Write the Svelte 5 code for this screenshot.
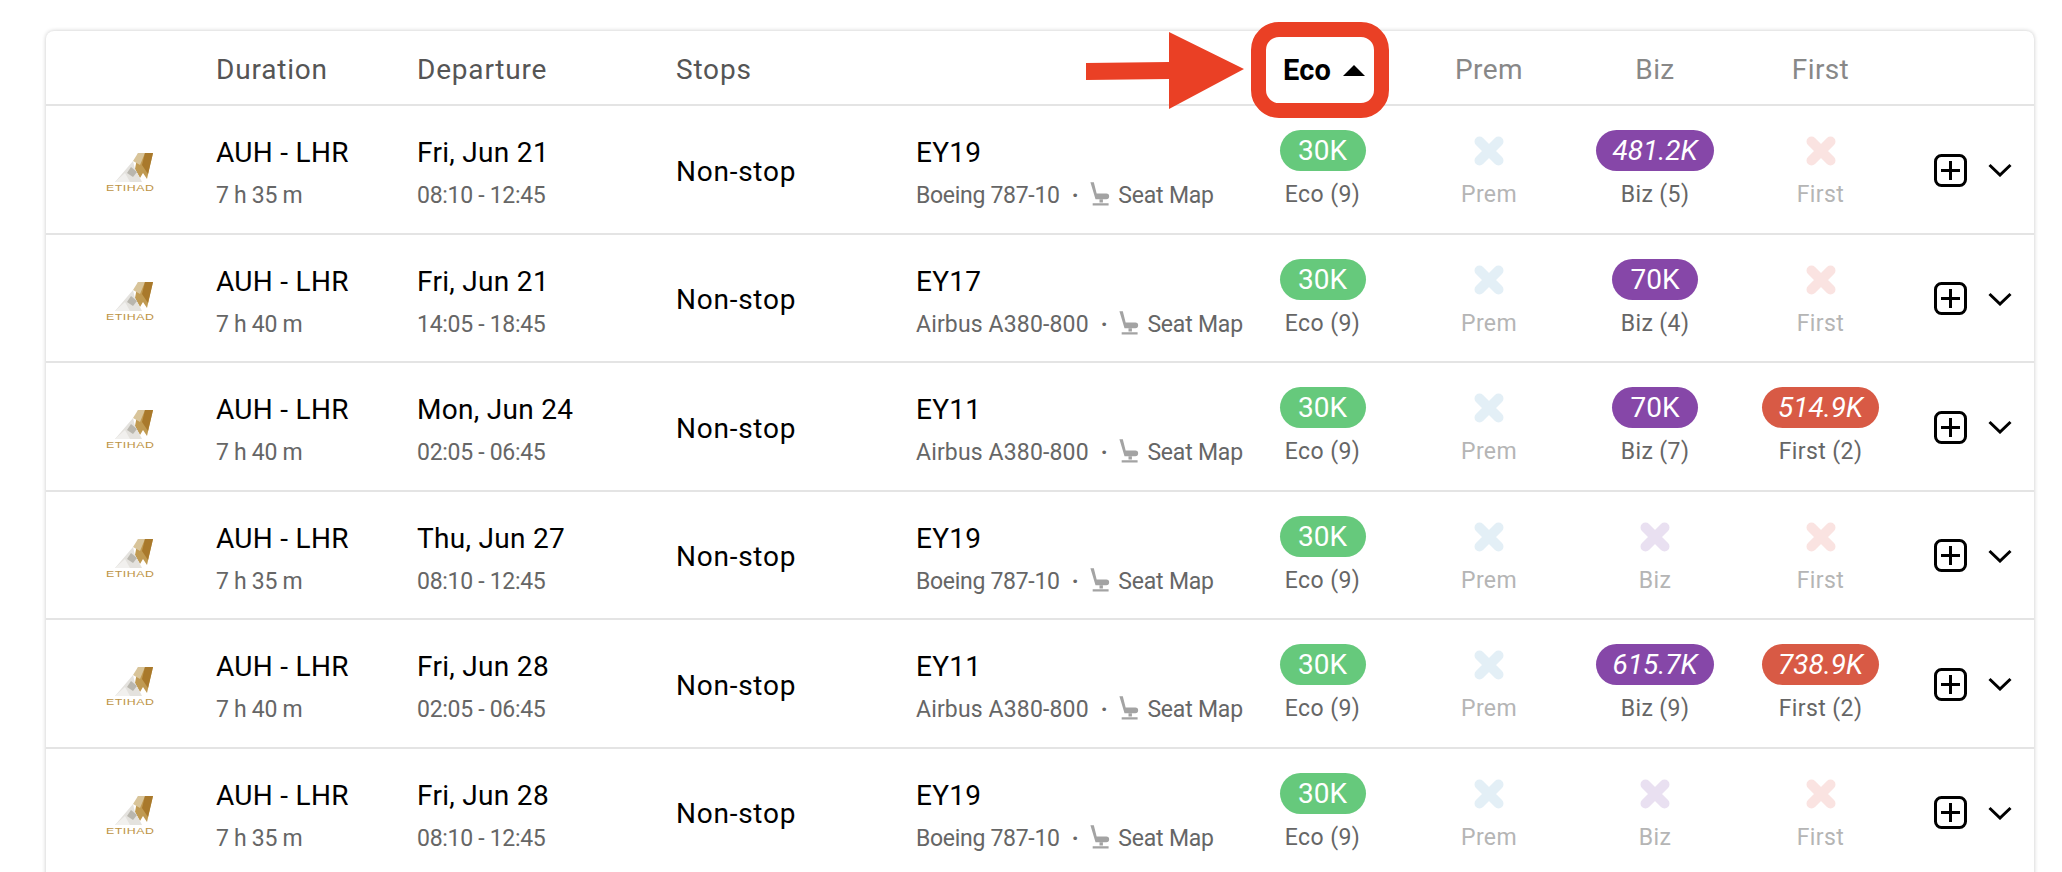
<script>
  const rows = [
    { date: 'Fri, Jun 21', dur: '7 h 35 m', time: '08:10 - 12:45', no: 'EY19', plane: 'Boeing 787-10', biz: ['481.2K', 'Biz (5)', true], first: null },
    { date: 'Fri, Jun 21', dur: '7 h 40 m', time: '14:05 - 18:45', no: 'EY17', plane: 'Airbus A380-800', biz: ['70K', 'Biz (4)', false], first: null },
    { date: 'Mon, Jun 24', dur: '7 h 40 m', time: '02:05 - 06:45', no: 'EY11', plane: 'Airbus A380-800', biz: ['70K', 'Biz (7)', false], first: ['514.9K', 'First (2)', true] },
    { date: 'Thu, Jun 27', dur: '7 h 35 m', time: '08:10 - 12:45', no: 'EY19', plane: 'Boeing 787-10', biz: null, first: null },
    { date: 'Fri, Jun 28', dur: '7 h 40 m', time: '02:05 - 06:45', no: 'EY11', plane: 'Airbus A380-800', biz: ['615.7K', 'Biz (9)', true], first: ['738.9K', 'First (2)', true] },
    { date: 'Fri, Jun 28', dur: '7 h 35 m', time: '08:10 - 12:45', no: 'EY19', plane: 'Boeing 787-10', biz: null, first: null }
  ];
</script>

{#snippet cross(cls)}
  <svg class="cross {cls}" viewBox="0 0 30 30" width="30" height="30" aria-hidden="true">
    <path d="M5.500 5.500 24.500 24.500M24.500 5.500 5.500 24.500" />
  </svg>
{/snippet}

{#snippet fare(cls, label, data)}
  <div class="fare">
    {#if data}
      <span class="pill {cls}" class:italic={data[2]}>{data[0]}</span>
      <span class="fare-label">{data[1]}</span>
    {:else}
      {@render cross(cls)}
      <span class="fare-label off">{label}</span>
    {/if}
  </div>
{/snippet}

<div class="page">
  <div class="card">
    <div class="grid head">
      <div></div>
      <div>Duration</div>
      <div>Departure</div>
      <div>Stops</div>
      <div></div>
      <div class="cab active">Eco <span class="caret"></span></div>
      <div class="cab">Prem</div>
      <div class="cab">Biz</div>
      <div class="cab">First</div>
      <div></div>
    </div>

    {#each rows as r}
      <div class="grid row">
        <div class="logo">
          <svg viewBox="0 0 48 31" width="48" height="31" aria-hidden="true">
            <polygon points="32,1 47,1 41,27 37,21 34,26 29,17" fill="#c09a52" />
            <polygon points="32,1 39,1 34,13 27,9" fill="#d8c49a" />
            <polygon points="39,1 47,1 42,22 36,13" fill="#a9792b" />
            <polygon points="27,9 29,17 34,26 36,30 9,30" fill="#e4e2de" />
            <polygon points="25,15 31,20 27,25 21,21" fill="#b9b6ae" />
            <polygon points="9,30 19,21 24,30" fill="#f1f0ee" />
          </svg>
          <span class="brand">ETIHAD</span>
        </div>
        <div class="two">
          <span class="main">AUH - LHR</span>
          <span class="sub">{r.dur}</span>
        </div>
        <div class="two">
          <span class="main">{r.date}</span>
          <span class="sub">{r.time}</span>
        </div>
        <div class="stops">Non-stop</div>
        <div class="two">
          <span class="main">{r.no}</span>
          <span class="sub flight">
            <span class:wide={r.plane.startsWith('Airbus')}>{r.plane}</span><span class="dot">·</span>
            <svg class="seat" viewBox="0 0 18 22" width="21" height="25" aria-hidden="true">
              <path d="M1 1h3l2.500 10H15a2.500 2.500 0 0 1 0 5H5.500Z" fill="#a3a3a3" />
              <path d="M9 16h3v3H9ZM3 19.500h14V21.500H3Z" fill="#a3a3a3" />
            </svg>
            <span class="map">Seat Map</span>
          </span>
        </div>
        {@render fare('eco', 'Eco', ['30K', 'Eco (9)', false])}
        {@render fare('prem', 'Prem', null)}
        {@render fare('biz', 'Biz', r.biz)}
        {@render fare('first', 'First', r.first)}
        <div class="actions">
          <svg viewBox="0 0 33 33" width="33" height="33" aria-hidden="true">
            <rect x="1.500" y="1.500" width="30" height="30" rx="6" />
            <path d="M16.500 7v19M7 16.500h19" />
          </svg>
          <svg viewBox="0 0 24 14" width="24" height="14" aria-hidden="true">
            <path d="M1.500 2 12 12 22.500 2" />
          </svg>
        </div>
      </div>
    {/each}
  </div>

  <div class="callout"></div>
  <svg class="arrow" viewBox="0 0 160 78" width="160" height="78" aria-hidden="true">
    <polygon points="0,31 83,30 83,0 158,37 83,77 83,47 0,48" />
  </svg>
</div>

<style>
  :global(body) {
    margin: 0;
    background: #fff;
    overflow: hidden;
  }

  .page {
    position: relative;
    width: 2062px;
    height: 872px;
    overflow: hidden;
    padding: 31px 28px 0 46px;
    box-sizing: border-box;
    font-family: Roboto, "Liberation Sans", sans-serif;
    color: #000;
  }

  .card {
    width: 1988px;
    background: #fff;
    border-radius: 8px 8px 0 0;
    box-shadow: 0 0 4px rgba(0, 0, 0, 0.22);
  }

  .grid {
    display: grid;
    grid-template-columns: 170px 201px 259px 240px 323px 167px 166px 166px 165px 131px;
    box-sizing: border-box;
  }

  .head {
    height: 75px;
    padding-top: 4px;
    align-items: center;
    border-bottom: 2px solid #e4e4e4;
    font-size: 28px;
    color: #555;
    letter-spacing: 0.8px;
  }

  .cab {
    text-align: center;
    color: #888;
    letter-spacing: 0.4px;
  }

  .active {
    color: #000;
    font-weight: 700;
    display: flex;
    align-items: center;
    justify-content: center;
    gap: 12px;
    font-size: 29px;
    letter-spacing: 0.2px;
    padding-left: 3px;
  }

  .caret {
    width: 0;
    height: 0;
    border-left: 11px solid transparent;
    border-right: 11px solid transparent;
    border-bottom: 11px solid #000;
    margin-top: 2px;
  }

  .row {
    height: 128.500px;
    border-bottom: 2px solid #e4e4e4;
  }

  .logo {
    display: flex;
    flex-direction: column;
    align-items: flex-start;
    padding: 46px 0 0 60px;
    line-height: 1;
  }

  .brand {
    font-family: "Liberation Sans", sans-serif;
    font-size: 9.500px;
    letter-spacing: 0.4px;
    color: #bd9344;
    transform: scaleX(1.3);
    transform-origin: left;
  }

  .two {
    display: flex;
    flex-direction: column;
    padding-top: 29px;
  }

  .main {
    font-size: 28px;
    line-height: 36px;
    letter-spacing: 0.3px;
    white-space: nowrap;
  }

  .sub {
    font-size: 23px;
    line-height: 30px;
    margin-top: 10px;
    color: #666;
    letter-spacing: -0.3px;
    white-space: nowrap;
  }

  .flight {
    display: flex;
    align-items: center;
  }

  .wide {
    letter-spacing: 0.15px;
  }

  .dot {
    margin: 0 11px 0 12px;
    font-weight: 700;
  }

  .seat {
    margin: -5px 8px 0 0;
    flex: none;
  }

  .map {
    letter-spacing: -0.2px;
  }

  .stops {
    align-self: center;
    padding-top: 4px;
    font-size: 28px;
    letter-spacing: 0.75px;
  }

  .fare {
    display: flex;
    flex-direction: column;
    align-items: center;
    padding-top: 24px;
  }

  .pill {
    box-sizing: border-box;
    min-width: 86px;
    height: 41px;
    line-height: 42px;
    padding: 0 16px;
    border-radius: 21px;
    font-size: 28px;
    text-align: center;
    color: #fff;
    margin-bottom: -1px;
  }

  .italic {
    font-style: italic;
  }

  .pill.eco { background: #66c97c; }
  .pill.biz { background: #8647a8; }
  .pill.first { background: #d85a45; }

  .cross {
    margin: 6px 0 4px;
    fill: none;
    stroke-width: 10;
    stroke-linecap: round;
    display: block;
  }

  .cross.prem { stroke: #e3eff6; }
  .cross.biz { stroke: #e9e0f1; }
  .cross.first { stroke: #fae3e1; }

  .fare-label {
    font-size: 23px;
    line-height: 30px;
    margin-top: 10px;
    color: #666;
    letter-spacing: 0.4px;
  }

  .off {
    color: #b5b5b5;
  }

  .actions {
    display: flex;
    align-items: center;
    gap: 21px;
    padding: 2px 0 0 31px;
  }

  .actions svg {
    fill: none;
    stroke: #000;
    stroke-width: 3;
    flex: none;
  }

  .callout {
    position: absolute;
    left: 1251px;
    top: 22px;
    width: 138px;
    height: 96px;
    box-sizing: border-box;
    border: 15px solid #ea4025;
    border-radius: 28px;
  }

  .arrow {
    position: absolute;
    left: 1086px;
    top: 32px;
    fill: #ea4025;
  }
</style>
